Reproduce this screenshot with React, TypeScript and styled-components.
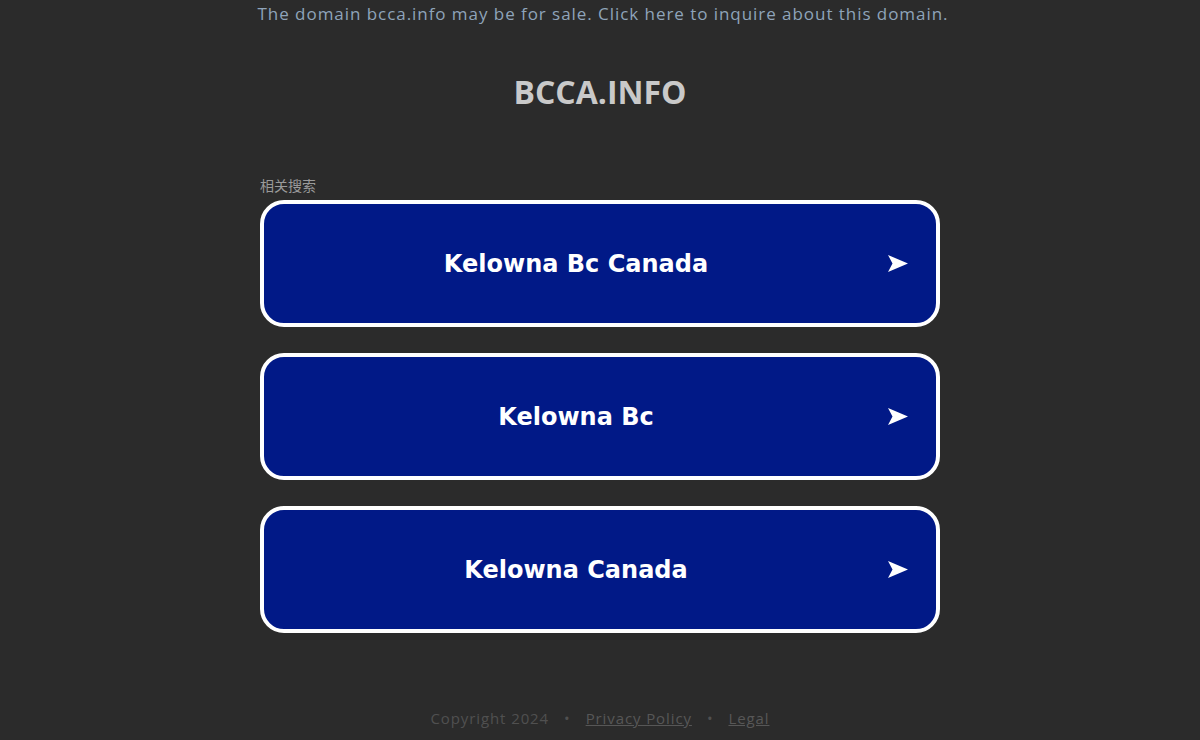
import React from "react";
import styled, { createGlobalStyle } from "styled-components";

const GlobalStyle = createGlobalStyle`
    html, body {
        margin: 0;
        padding: 0;
        background: #2b2b2b;
    }
    body {
        font-family: "Open Sans", "Noto Sans", sans-serif;
    }
`;

const searches = ["Kelowna Bc Canada", "Kelowna Bc", "Kelowna Canada"];

export default function App() {
    return (
        <Page>
            <GlobalStyle />
            <SaleLink href='#'>
                The domain bcca.info may be for sale. Click here to inquire
                about this domain.
            </SaleLink>
            <Title>BCCA.INFO</Title>
            <Results>
                <Label>相关搜索</Label>
                {searches.map((s) => (
                    <ResultButton key={s} href='#'>
                        <ResultText>{s}</ResultText>
                        <Arrow viewBox='0 0 20 18'>
                            <path d='M0 0 L20 8.5 L0 17 L4.5 8.5 Z' fill='#fff' />
                        </Arrow>
                    </ResultButton>
                ))}
            </Results>
            <Footer>
                <span>Copyright 2024</span>
                <Dot>•</Dot>
                <FooterLink href='#'>Privacy Policy</FooterLink>
                <Dot>•</Dot>
                <FooterLink href='#'>Legal</FooterLink>
            </Footer>
        </Page>
    );
}

const Page = styled.div`
    display: flex;
    flex-direction: column;
    align-items: center;
    min-height: 740px;
    box-sizing: border-box;
`;

const SaleLink = styled.a`
    margin-top: 2px;
    padding-left: 6px;
    font-size: 17px;
    line-height: 24px;
    letter-spacing: 0.95px;
    color: #8fa4ba;
    text-decoration: none;
`;

const Title = styled.h1`
    margin: 46px 0 0;
    font-size: 32px;
    line-height: 40px;
    font-weight: 700;
    color: #c9c9c9;
`;

const Results = styled.div`
    width: 680px;
    margin-top: 66px;
    display: flex;
    flex-direction: column;
    gap: 26px;
`;

const Label = styled.div`
    font-family: "Noto Sans CJK SC", sans-serif;
    font-size: 14px;
    line-height: 18px;
    color: #9a9a9a;
    margin-top: -2px;
    margin-bottom: -20px;
`;

const ResultButton = styled.a`
    display: flex;
    align-items: center;
    height: 127px;
    box-sizing: border-box;
    border: 4px solid #ffffff;
    border-radius: 24px;
    background: #011987;
    text-decoration: none;
    padding-right: 28px;
`;

const ResultText = styled.span`
    flex: 1;
    text-align: center;
    font-family: "DejaVu Sans", Verdana, sans-serif;
    font-weight: 700;
    font-size: 24px;
    color: #ffffff;
`;

const Arrow = styled.svg`
    width: 20px;
    height: 18px;
    flex: none;
`;

const Footer = styled.div`
    margin-top: 75px;
    display: flex;
    gap: 15px;
    font-size: 15px;
    letter-spacing: 0.9px;
    color: #505050;
`;

const Dot = styled.span`
    color: #505050;
`;

const FooterLink = styled.a`
    color: #575757;
    text-decoration: underline;
`;
